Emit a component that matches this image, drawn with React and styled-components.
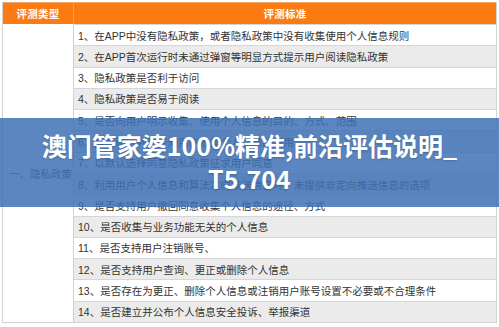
import React from "react";
import styled, { createGlobalStyle } from "styled-components";

const GlobalStyle = createGlobalStyle`
  html, body { margin: 0; padding: 0; background: #ffffff; }
  body { font-family: "Liberation Sans", "Noto Sans CJK SC", sans-serif; }
`;

const Page = styled.div`
  position: relative;
  width: 499px;
  height: 327px;
  padding: 2px 2px 0 2px;
  box-sizing: border-box;
  overflow: hidden;
  background: #fff;
`;

const Table = styled.div`
  display: grid;
  grid-template-columns: 71px 1fr;
  grid-template-rows: 22px repeat(14, 1fr);
  width: 495px;
  height: 321px;
  box-sizing: border-box;
  border: 1px solid #d2d2d2;
  border-top: none;
`;

const HeadCell = styled.div`
  display: flex;
  align-items: center;
  justify-content: center;
  background: #fc7a12;
  color: #ffffff;
  font-family: "Noto Sans CJK SC", sans-serif;
  font-weight: 700;
  font-size: 10.5px;
  letter-spacing: 0.2px;
  border-top: 1px solid #f4a768;
  border-right: ${(p) => (p.$last ? "none" : "1px solid rgba(255,255,255,0.25)")};
  box-sizing: border-box;
`;

const TypeCell = styled.div`
  grid-row: 2 / span 14;
  display: flex;
  align-items: center;
  padding-left: 6px;
  background: #ffffff;
  color: #3a3a3a;
  font-family: "Liberation Sans", "Noto Sans CJK SC", sans-serif;
  font-size: 10.5px;
  border-right: 1px solid #d2d2d2;
`;

const Row = styled.div`
  display: flex;
  align-items: center;
  padding-left: 4px;
  background: ${(p) => (p.$alt ? "#ebebeb" : "#ffffff")};
  color: #333333;
  font-size: 10.5px;
  white-space: nowrap;
  overflow: hidden;
  border-top: 1px solid #d6d6d6;
  box-sizing: border-box;
`;

const Banner = styled.div`
  position: absolute;
  left: 0;
  right: 0;
  top: 118px;
  height: 89px;
  background: rgba(62, 113, 181, 0.85);
  display: flex;
  align-items: center;
  justify-content: center;
`;

const Title = styled.div`
  display: flex;
  flex-direction: column;
  align-items: center;
  color: #ffffff;
  font-family: "Noto Sans CJK SC", sans-serif;
  font-weight: 700;
  font-size: 25px;
  line-height: 33px;
  text-shadow: 0 1px 2px rgba(0, 0, 0, 0.2);
  margin-top: -1px;
`;

const TitleLine = styled.span`
  display: block;
  white-space: nowrap;
`;

const rows = [
  "1、在APP中没有隐私政策，或者隐私政策中没有收集使用个人信息规则",
  "2、在APP首次运行时未通过弹窗等明显方式提示用户阅读隐私政策",
  "3、隐私政策是否利于访问",
  "4、隐私政策是否易于阅读",
  "5、是否向用户明示收集、使用个人信息的目的、方式、范围",
  "6、是否逐一列出告知用户收集个人信息的使用",
  "7、以默认选择同意隐私政策征求用户同意",
  "8、利用用户个人信息和算法定向推送信息时，未提供非定向推送信息的选项",
  "9、是否支持用户撤回同意收集个人信息的途径、方式",
  "10、是否收集与业务功能无关的个人信息",
  "11、是否支持用户注销账号、",
  "12、是否支持用户查询、更正或删除个人信息",
  "13、是否存在为更正、删除个人信息或注销用户账号设置不必要或不合理条件",
  "14、是否建立并公布个人信息安全投诉、举报渠道",
];

export default function App() {
  return (
    <>
      <GlobalStyle />
      <Page>
        <Table>
          <HeadCell>评测类型</HeadCell>
          <HeadCell $last>评测标准</HeadCell>
          <TypeCell>一、隐私政策</TypeCell>
          {rows.map((t, i) => (
            <Row key={i} $alt={i % 2 === 1}>
              {t}
            </Row>
          ))}
        </Table>
        <Banner>
          <Title>
            <TitleLine>澳门管家婆100%精准,前沿评估说明_</TitleLine>
            <TitleLine>T5.704</TitleLine>
          </Title>
        </Banner>
      </Page>
    </>
  );
}
